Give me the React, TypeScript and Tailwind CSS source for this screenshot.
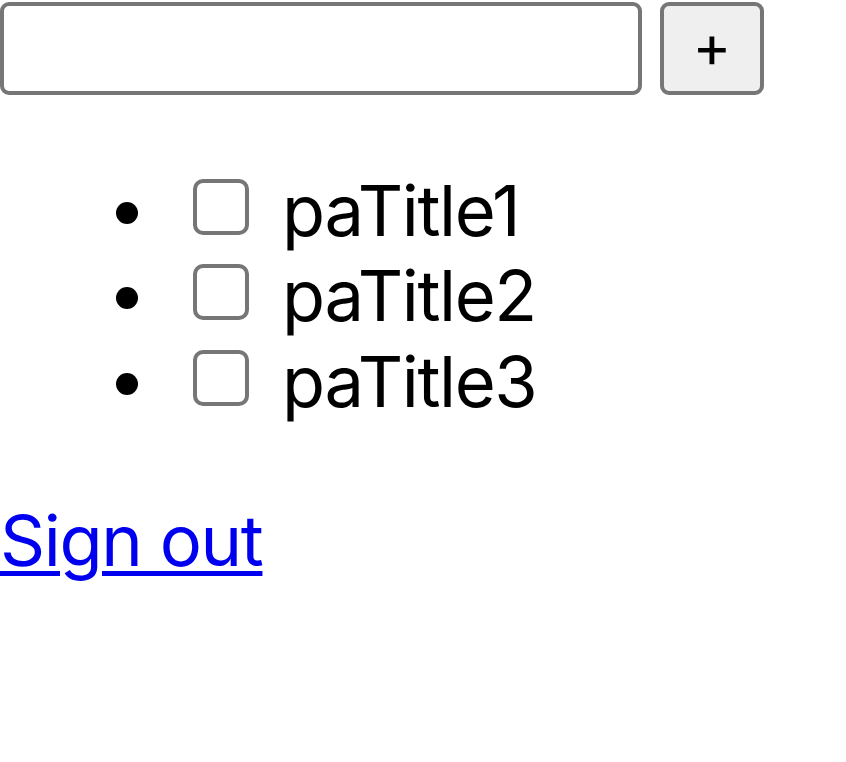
import React from "react";

const items = ["paTitle1", "paTitle2", "paTitle3"];

export default function App() {
  return (
    <div className="min-h-[762px] w-[846px] bg-white text-black font-['Inter',sans-serif] text-[70.4px] leading-[85.3px] tracking-[-1.4px]">
      <div className="flex items-start pt-[2px]">
        <input
          type="text"
          className="box-border h-[93px] w-[642px] rounded-[9px] border-[4px] border-[#767676] bg-white outline-none"
        />
        <button className="ml-[18px] box-border flex h-[93px] w-[104px] items-center justify-center rounded-[9px] border-[4px] border-[#767676] bg-[#efefef] font-['Inter',sans-serif] text-[58.7px] leading-none text-black tracking-normal">
          <span className="-mt-[4px]">+</span>
        </button>
      </div>
      <ul className="mt-[73px]">
        {items.map((t) => (
          <li key={t} className="flex h-[85.3px] items-start">
            <span className="ml-[116px] mt-[34px] h-[22px] w-[22px] shrink-0 rounded-full bg-black" />
            <span className="ml-[55px] mt-[11px] box-border h-[56px] w-[56px] shrink-0 rounded-[10px] border-[4px] border-[#767676] bg-white" />
            <span className="ml-[33px] whitespace-nowrap">{t}</span>
          </li>
        ))}
      </ul>
      <div className="mt-[74px]">
        <a
          href="#"
          className="text-[#0000ee] underline decoration-[5px] underline-offset-[5px]"
        >
          Sign out
        </a>
      </div>
    </div>
  );
}
